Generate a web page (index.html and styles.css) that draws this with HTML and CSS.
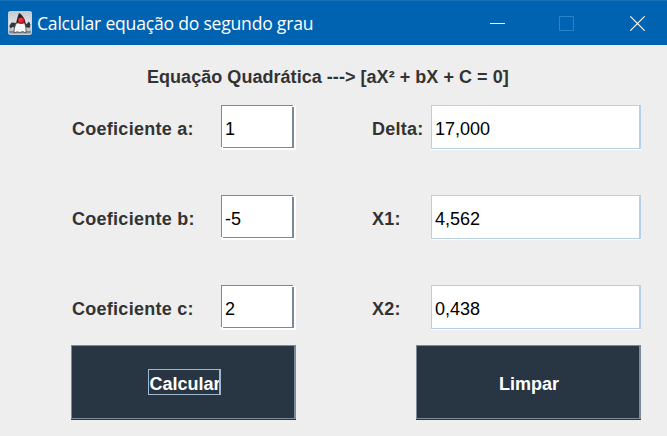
FILE: index.html
```html
<!DOCTYPE html>
<html lang="pt-BR">
<head>
<meta charset="utf-8">
<title>Calcular equação do segundo grau</title>
<link rel="stylesheet" href="styles.css">
</head>
<body>
<header class="titlebar">
  <svg class="logo" width="24" height="24" viewBox="0 0 24 24">
    <defs>
      <linearGradient id="tile" x1="0" y1="0" x2="0" y2="1">
        <stop offset="0" stop-color="#c6c9d0"/><stop offset=".5" stop-color="#e0e1e5"/><stop offset="1" stop-color="#a9acb4"/>
      </linearGradient>
      <radialGradient id="nose" cx=".4" cy=".35"><stop offset="0" stop-color="#ff4b3c"/><stop offset="1" stop-color="#cb101b"/></radialGradient>
    </defs>
    <rect x=".4" y=".4" width="23.2" height="23.2" rx="2" fill="url(#tile)" stroke="#e4e7ec" stroke-width=".8"/>
    <path d="M1 20h22v2H1z" fill="#85888f"/>
    <path d="M9 12 3.500 11.500 1.300 15 2.500 17.500 4.500 16 8 17z" fill="#33363d"/>
    <path d="M15.500 12 18.500 13 21 10.500 22.500 13.500 21.500 17 19.400 16.500 16 16z" fill="#33363d"/>
    <path d="M11 2C10 5 8.700 8.500 8 13L17.800 13C17.200 8 14.600 4 11 2z" fill="#222429"/>
    <path d="M8.400 12C6.800 15 5.800 18.500 6 22L9 20.800 12 21.500 14.600 20.500 18 22C18.200 18 17.700 15 16.600 12z" fill="#f7f7f7" stroke="#44474e" stroke-width=".8"/>
    <circle cx="13.300" cy="9.700" r="3.200" fill="url(#nose)"/>
  </svg>
  <h1 class="caption">Calcular equação do segundo grau</h1>
  <div class="controls">
    <svg width="155" height="15" viewBox="0 0 155 15" fill="none">
      <path d="M0 7.500h15" stroke="#fff"/>
      <path d="M69.500 .5h14v14h-14z" stroke="#2683cd"/>
      <path d="M140.300 .3l14.400 14.400M154.700 .3l-14.400 14.400" stroke="#fff" stroke-width="1.100"/>
    </svg>
  </div>
</header>
<main class="panel">
  <h2 class="formula">Equação Quadrática ---&gt; [aX² + bX + C = 0]</h2>
  <div class="fields">
    <label for="a">Coeficiente a:</label>
    <div class="entry"><input id="a" value="1"></div>
    <label class="result-label" for="delta">Delta:</label>
    <div class="result"><input id="delta" value="17,000" readonly></div>
    <label for="b">Coeficiente b:</label>
    <div class="entry"><input id="b" value="-5"></div>
    <label class="result-label" for="x1">X1:</label>
    <div class="result"><input id="x1" value="4,562" readonly></div>
    <label for="c">Coeficiente c:</label>
    <div class="entry"><input id="c" value="2"></div>
    <label class="result-label" for="x2">X2:</label>
    <div class="result"><input id="x2" value="0,438" readonly></div>
  </div>
  <div class="actions">
    <button type="button"><span class="focus">Calcular</span></button>
    <button type="button"><span>Limpar</span></button>
  </div>
</main>
</body>
</html>
```
FILE: styles.css
```css
* { box-sizing: border-box; }

body {
  margin: 0;
  width: 667px;
  height: 436px;
  overflow: hidden;
  background: #eee;
  color: #333;
  font: bold 18px/20px "Liberation Sans", Arial, sans-serif;
}

.titlebar {
  display: flex;
  align-items: center;
  height: 45px;
  padding: 0 22px 0 8px;
  border-top: 1px solid #1a70b8;
  background: #0063b1;
}

.logo { flex: none; }

.caption {
  margin: 0 0 0 5px;
  color: #fff;
  font: 17.600px/24px "Open Sans", "Noto Sans", sans-serif;
  letter-spacing: -.23px;
  white-space: nowrap;
}

.controls { margin-left: auto; height: 15px; }
.controls svg { display: block; }

.panel { padding-top: 22px; }

.formula {
  margin: 0 0 18px 147px;
  font-size: 18px;
  line-height: 20px;
  letter-spacing: .04px;
  white-space: nowrap;
}

.fields {
  display: grid;
  grid-template-columns: 149px 75px 135px 210px;
  grid-auto-rows: 45px;
  row-gap: 45px;
  margin-left: 72px;
}

.fields label { padding-top: 14px; letter-spacing: .27px; white-space: nowrap; }
.fields .result-label { padding-left: 76px; }

/* Etched frame: dark edges with a white highlight below and to the right */
.entry {
  --edge: linear-gradient(#7a8a99, #7a8a99);
  --shine: linear-gradient(#fff, #fff);
  background:
    var(--edge) 0 0 / 72px 1px,
    var(--edge) 0 0 / 1px 42px,
    var(--edge) 2px 42px / 71px 1px,
    var(--edge) 71px 2px / 2px 41px,
    var(--shine) 1px 1px / 74px 44px,
    var(--shine) 0 43px / 75px 2px;
  background-repeat: no-repeat;
}

.result { border-bottom: 1px solid #fff; }

input {
  display: block;
  width: 100%;
  height: 100%;
  margin: 0;
  padding: 5px 3px 0;
  border: 1px solid #b8cfe5;
  border-right-width: 2px;
  border-radius: 0;
  outline: 0;
  background: #fff;
  color: #000;
  font: 18px/20px "Liberation Sans", Arial, sans-serif;
}

.entry input {
  padding: 3px 4px 0;
  border: 0;
  background: transparent;
}

.actions {
  display: flex;
  gap: 120px;
  margin: 15px 0 0 71px;
}

button {
  display: flex;
  align-items: center;
  justify-content: center;
  width: 225px;
  height: 74px;
  padding: 4px 0 0 2px;
  border: solid #7a8a99;
  border-width: 1px 2px 1px 1px;
  border-radius: 0;
  background: #283542;
  box-shadow: 0 1px #283542;
  color: #fff;
  font: bold 18px/20px "Liberation Sans", Arial, sans-serif;
}

.focus {
  width: 73px;
  height: 26px;
  margin-bottom: 5px;
  padding: 4px 0 0 1px;
  overflow: hidden;
  border: 1px solid #a3b8cc;
  border-right-width: 2px;
  text-align: left;
}
```
